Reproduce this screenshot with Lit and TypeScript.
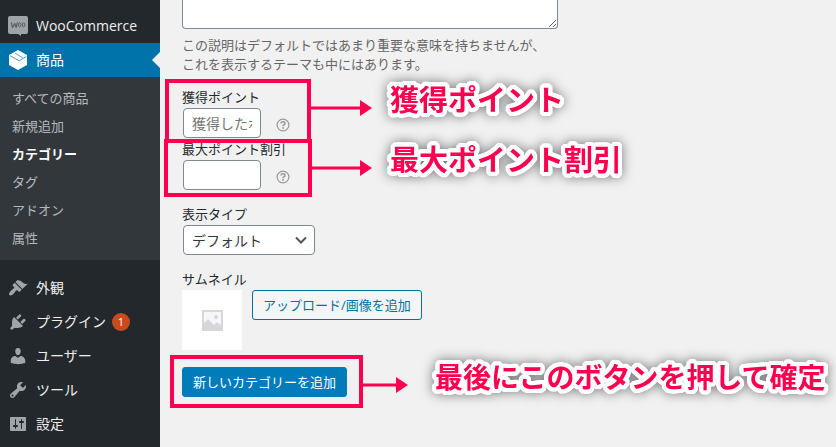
import { LitElement, html, css, svg } from "lit";
import { customElement } from "lit/decorators.js";

const icons = {
  woo: svg`<path fill="#9ea3a8" d="M2 0h16q2 0 2 2v14q0 2-2 2h-5v2l-3-2H2q-2 0-2-2V2q0-2 2-2z"/><path fill="none" stroke="#555b61" stroke-width="1.100" stroke-linejoin="round" d="M3.300 6.500l1.200 5 2.200-4 1.400 4 1.300-5.200"/><ellipse cx="11.700" cy="8.800" rx="1.300" ry="2" fill="none" stroke="#555b61"/><ellipse cx="15.600" cy="8.800" rx="1.300" ry="2" fill="none" stroke="#555b61"/>`,
  box: svg`<path fill="#fff" d="M10 0l9 5v10l-9 5-9-5V5z"/><path fill="none" stroke="#0073aa" stroke-width=".7" d="M2.200 5.800l9 5 6.800-4.200M7.200 3.200l7.300 4.600"/>`,
  brush: svg`<path d="M14.480 11.060L7.410 3.990l1.500-1.500c.5-.56 2.300-.47 3.510.32 1.210.8 1.430 1.280 2.910 2.100 1.180.64 2.450 1.260 4.450.85zm-.71.71L6.700 4.700 4.930 6.470c-.39.39-.39 1.020 0 1.410l1.060 1.060c.39.39.39 1.030 0 1.420-.6.6-1.430 1.110-2.210 1.690-.35.26-.7.53-1.010.84C1.430 14.230.4 16.080 1.400 17.070c.99 1 2.840-.03 4.180-1.360.31-.31.58-.66.85-1.020.57-.78 1.080-1.610 1.690-2.210.39-.39 1.020-.39 1.410 0l1.060 1.060c.39.39 1.020.39 1.410 0z"/>`,
  plug: svg`<path d="M13.110 4.360L9.870 7.600 8 5.730l3.240-3.240c.35-.34 1.050-.2 1.560.32.52.51.66 1.210.31 1.550zm-8 1.770l.91-1.120 9.010 9.010-1.190.84c-.71.71-2.630 1.160-3.820 1.160H6.140L4.900 17.260c-.59.59-1.540.59-2.120 0-.59-.58-.59-1.530 0-2.120l1.240-1.240v-3.880c0-1.130.4-3.190 1.090-3.890zm7.260 3.970l3.240-3.240c.34-.35 1.040-.21 1.550.31.52.51.66 1.210.31 1.550l-3.240 3.250z"/>`,
  user: svg`<path d="M10 9.250c-2.270 0-2.730-3.440-2.730-3.440C7 4.020 7.820 2 9.970 2c2.160 0 2.980 2.020 2.710 3.810 0 0-.41 3.440-2.680 3.440zm0 2.570L12.720 10c2.390 0 4.520 2.330 4.520 4.530v2.490s-3.650 1.130-7.240 1.130c-3.650 0-7.240-1.130-7.240-1.130v-2.490c0-2.250 1.940-4.480 4.470-4.480z"/>`,
  wrench: svg`<path d="M16.680 9.770c-1.340 1.340-3.300 1.670-4.950.99l-5.410 6.520c-.99.99-2.590.99-3.580 0s-.99-2.590 0-3.570l6.520-5.420c-.68-1.650-.35-3.610.99-4.950 1.280-1.280 3.120-1.620 4.720-1.060l-2.890 2.890 2.820 2.820 2.860-2.870c.53 1.580.18 3.390-1.080 4.650zM3.810 16.210c.4.39 1.040.39 1.430 0 .4-.4.4-1.040 0-1.430-.39-.4-1.030-.4-1.430 0-.39.39-.39 1.030 0 1.430z"/>`,
  sliders: svg`<path d="M18 16V4c0-.55-.45-1-1-1H3c-.55 0-1 .45-1 1v12c0 .55.45 1 1 1h14c.55 0 1-.45 1-1zM8 11h1c.55 0 1 .45 1 1s-.45 1-1 1H8v1.500c0 .28-.22.5-.5.5s-.5-.22-.5-.5V13H6c-.55 0-1-.45-1-1s.45-1 1-1h1V5.500c0-.28.22-.5.5-.5s.5.22.5.5V11zm5-2h-1c-.55 0-1-.45-1-1s.45-1 1-1h1V5.500c0-.28.22-.5.5-.5s.5.22.5.5V7h1c.55 0 1 .45 1 1s-.45 1-1 1h-1v5.500c0 .28-.22.5-.5.5s-.5-.22-.5-.5V9z"/>`,
};

const submenu = ["すべての商品", "新規追加", "カテゴリー", "タグ", "アドオン", "属性"];

@customElement("admin-menu")
class AdminMenu extends LitElement {
  static styles = css`
    :host {
      display: block;
      box-sizing: border-box;
      padding-top: 9px;
      background: #23282d;
      font-size: 14px;
    }
    .item {
      display: flex;
      align-items: center;
      gap: 8px;
      height: 34px;
      padding-left: 8px;
      color: #eee;
      text-decoration: none;
      white-space: nowrap;
    }
    .name {
      padding-bottom: 2px;
    }
    .icon {
      width: 20px;
      height: 20px;
      flex: none;
      fill: #a0a5aa;
    }
    .current {
      position: relative;
      background: #0073aa;
      color: #fff;
    }
    .current::after {
      content: "";
      position: absolute;
      right: 0;
      top: 9px;
      border: 8px solid transparent;
      border-right-color: #f1f1f1;
    }
    .sub {
      margin: 0 0 11px;
      padding: 7px 0 8px;
      list-style: none;
      background: #32373c;
      font-size: 13px;
    }
    .link {
      display: block;
      padding-left: 12px;
      line-height: 28px;
      color: #b4b9be;
      text-decoration: none;
    }
    .active {
      color: #fff;
      font-weight: 700;
    }
    .count {
      width: 18px;
      margin-left: -2px;
      border-radius: 9px;
      background: #ca4a1f;
      color: #fff;
      font-size: 11px;
      line-height: 18px;
      text-align: center;
    }
  `;

  item(icon: keyof typeof icons, label: string, count = 0, current = false) {
    return html`<a class="item ${current ? "current" : ""}" href="#">
      <svg class="icon" viewBox="0 0 20 20" aria-hidden="true">${icons[icon]}</svg>
      <span class="name">${label}</span>
      ${count ? html`<span class="count">${count}</span>` : ""}
    </a>`;
  }

  render() {
    return html`<nav>
      ${this.item("woo", "WooCommerce")}
      ${this.item("box", "商品", 0, true)}
      <ul class="sub">
        ${submenu.map(
          (name) => html`<li>
            <a class="link ${name === "カテゴリー" ? "active" : ""}" href="#">${name}</a>
          </li>`
        )}
      </ul>
      ${this.item("brush", "外観")}
      ${this.item("plug", "プラグイン", 1)}
      ${this.item("user", "ユーザー")}
      ${this.item("wrench", "ツール")}
      ${this.item("sliders", "設定")}
    </nav>`;
  }
}

@customElement("app-root")
class AppRoot extends LitElement {
  static styles = css`
    :host {
      display: grid;
      grid-template-columns: 160px minmax(0, 1fr);
      min-height: 100vh;
      background: #f1f1f1;
      color: #23282d;
      font-family: "Open Sans", "Noto Sans CJK JP", sans-serif;
      font-size: 13px;
    }
    .form {
      padding-left: 22px;
    }
    .area {
      display: block;
      box-sizing: border-box;
      width: 376px;
      max-width: 100%;
      height: 29px;
      margin: 0;
      border: 1px solid #7e8993;
      border-top: 0;
      border-radius: 0 0 4px 4px;
      background: #fff;
    }
    .hint {
      margin: 7px 0 14px;
      color: #666;
      line-height: 19px;
    }
    .field {
      position: relative;
      margin-bottom: 15px;
    }
    .tight {
      margin-bottom: 2px;
    }
    .label {
      display: block;
      padding-bottom: 2px;
      line-height: 18px;
    }
    .row {
      display: flex;
      align-items: center;
      gap: 15px;
      padding-left: 1px;
    }
    .input,
    .select {
      box-sizing: border-box;
      height: 30px;
      margin: 0;
      padding: 0 8px;
      border: 1px solid #7e8993;
      border-radius: 4px;
      background: #fff;
      color: #32373c;
      font: inherit;
      font-size: 14px;
    }
    .input {
      width: 78px;
    }
    .input::placeholder {
      color: #757575;
    }
    .pick {
      display: grid;
      width: 132px;
      margin-left: 1px;
      align-items: center;
    }
    .select {
      grid-area: 1 / 1;
      width: 100%;
      appearance: none;
    }
    .chevron {
      grid-area: 1 / 1;
      justify-self: end;
      width: 16px;
      height: 16px;
      margin-right: 6px;
      pointer-events: none;
    }
    .help {
      width: 14px;
      height: 14px;
      padding-top: 4px;
    }
    .media {
      display: flex;
      align-items: flex-start;
      gap: 10px;
    }
    .thumb {
      width: 60px;
      height: 60px;
      background: #fff;
    }
    .button {
      height: 30px;
      padding: 0 10px 2px;
      border: 1px solid #0071a1;
      border-radius: 3px;
      background: #f3f5f6;
      color: #0071a1;
      font: inherit;
      white-space: nowrap;
    }
    .primary {
      border-color: #007cba;
      background: #007cba;
      color: #fff;
    }
    .submit {
      position: relative;
      padding-top: 2px;
    }
    .frame {
      position: absolute;
      box-sizing: border-box;
      border: 4px solid #ff0050;
      pointer-events: none;
    }
    .earn {
      left: -17px;
      top: -9px;
      width: 146px;
      height: 64px;
    }
    .discount {
      left: -18px;
      top: -1px;
      width: 148px;
      height: 58px;
    }
    .confirm {
      left: -12px;
      top: -10px;
      width: 193px;
      height: 53px;
    }
    .callout {
      position: absolute;
      display: flex;
      align-items: center;
      gap: 18px;
    }
    .from-earn,
    .from-discount {
      left: 128px;
    }
    .from-earn {
      top: -10px;
    }
    .from-discount {
      top: -2px;
    }
    .from-confirm {
      left: 180px;
      top: -10px;
    }
    .arrow {
      flex: none;
      height: 16px;
      margin-top: 16px;
      fill: #ff0050;
    }
    .long {
      width: 62px;
    }
    .short {
      width: 46px;
    }
    .note {
      color: #ff0050;
      font-weight: 700;
      font-size: 29px;
      line-height: 44px;
      white-space: nowrap;
      text-shadow:
        4px 0 #fff, 4px 1px #fff, 4px 2px #fff, 3px 3px #fff, 2px 4px #fff, 1px 4px #fff,
        0 4px #fff, -1px 4px #fff, -2px 4px #fff, -3px 3px #fff, -4px 2px #fff, -4px 1px #fff,
        -4px 0 #fff, -4px -1px #fff, -4px -2px #fff, -3px -3px #fff, -2px -4px #fff, -1px -4px #fff,
        0 -4px #fff, 1px -4px #fff, 2px -4px #fff, 3px -3px #fff, 4px -2px #fff, 4px -1px #fff,
        2px 0 #fff, -2px 0 #fff, 0 2px #fff, 0 -2px #fff;
      filter: drop-shadow(0 0 6px rgba(0, 0, 0, 0.5));
    }
    .small {
      margin-left: 9px;
      font-size: 28px;
    }
  `;

  help() {
    return html`<svg class="help" viewBox="0 0 14 14" role="img" aria-label="ヘルプ">
      <circle cx="7" cy="7" r="5.900" fill="none" stroke="#999" stroke-width="1.200" />
      <path d="M5 5.600q0-1.900 2-1.900t2 1.700q0 1-1.200 1.600-.8.400-.8 1.300" fill="none" stroke="#999" stroke-width="1.400" />
      <circle cx="7" cy="10" r=".9" fill="#999" />
    </svg>`;
  }

  longArrow() {
    return html`<svg class="arrow long" viewBox="0 0 62 16" aria-hidden="true">
      <path d="M0 6.500h50V0l12 8-12 8V9.500H0z" />
    </svg>`;
  }

  render() {
    return html`
      <admin-menu></admin-menu>
      <main class="form">
        <textarea class="area" aria-label="説明"></textarea>
        <p class="hint">
          この説明はデフォルトではあまり重要な意味を持ちませんが、<br />これを表示するテーマも中にはあります。
        </p>
        <div class="field tight">
          <label class="label" for="earn">獲得ポイント</label>
          <div class="row">
            <input class="input" id="earn" placeholder="獲得したポイント" />
            ${this.help()}
          </div>
          <div class="frame earn"></div>
          <div class="callout from-earn">${this.longArrow()}<strong class="note">獲得ポイント</strong></div>
        </div>
        <div class="field">
          <label class="label" for="discount">最大ポイント割引</label>
          <div class="row">
            <input class="input" id="discount" />
            ${this.help()}
          </div>
          <div class="frame discount"></div>
          <div class="callout from-discount">${this.longArrow()}<strong class="note">最大ポイント割引</strong></div>
        </div>
        <div class="field">
          <label class="label" for="type">表示タイプ</label>
          <div class="pick">
            <select class="select" id="type">
              <option>デフォルト</option>
            </select>
            <svg class="chevron" viewBox="0 0 16 16" aria-hidden="true">
              <path d="M3 5.500l5 5 5-5" fill="none" stroke="#555" stroke-width="2" />
            </svg>
          </div>
        </div>
        <div class="field">
          <span class="label">サムネイル</span>
          <div class="media">
            <svg class="thumb" viewBox="0 0 60 60" role="img" aria-label="サムネイル">
              <path fill="#d5d7db" d="M20 20h21v21H20z" />
              <path fill="#f6f7f8" d="M22 22h17v13l-4-3-3 3-6-6-4 4z" />
              <circle cx="34" cy="27" r="2" fill="#d5d7db" />
            </svg>
            <button class="button" type="button">アップロード/画像を追加</button>
          </div>
        </div>
        <div class="submit">
          <button class="button primary" type="button">新しいカテゴリーを追加</button>
          <div class="frame confirm"></div>
          <div class="callout from-confirm">
            <svg class="arrow short" viewBox="0 0 46 16" aria-hidden="true">
              <path d="M0 6.500h34V0l12 8-12 8V9.500H0z" />
            </svg>
            <strong class="note small">最後にこのボタンを押して確定</strong>
          </div>
        </div>
      </main>
    `;
  }
}
